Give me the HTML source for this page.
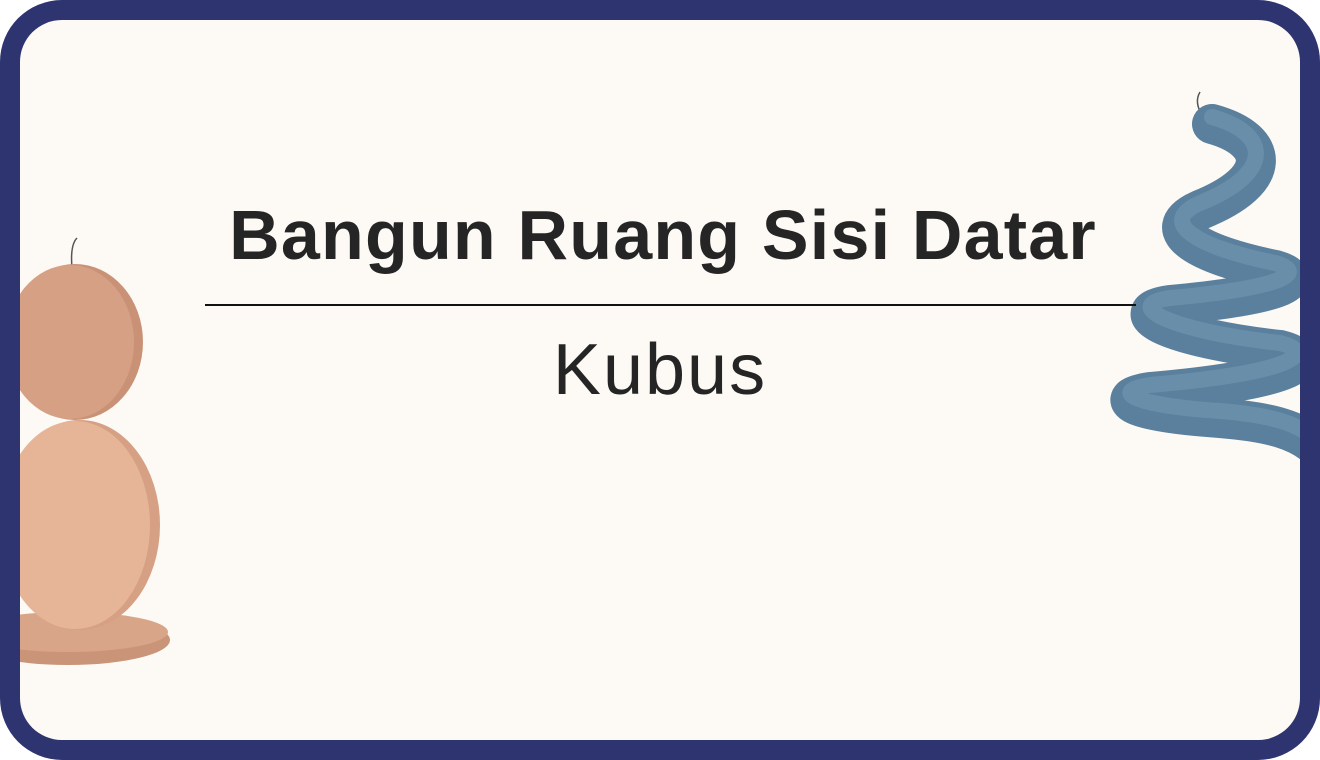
<!DOCTYPE html>
<html><head><style>
html,body{margin:0;padding:0;width:1320px;height:760px;overflow:hidden;background:#fff}
.outer{position:absolute;left:0;top:0;width:1320px;height:760px;background:#2e3470;border-radius:62px}
.inner{position:absolute;left:20px;top:20px;width:1280px;height:720px;background:#fdfaf5;border-radius:42px;overflow:hidden}
.t1{position:absolute;left:0;width:1320px;top:195px;line-height:1;text-align:center;font:bold 70px "Liberation Sans",sans-serif;color:#252525;letter-spacing:1.2px;padding-left:3px}
.t2{position:absolute;left:0;width:1320px;top:329px;line-height:1;text-align:center;font:72px "Liberation Sans",sans-serif;color:#252525;letter-spacing:2px}
.line{position:absolute;left:205px;top:304px;width:931px;height:2px;background:#111}
</style></head><body>
<div class="outer"></div>
<div class="inner">
<svg width="1280" height="720" style="position:absolute;left:0;top:0">
<path d="M52,248 Q50,225 57,218" stroke="#555" stroke-width="1.5" fill="none"/>
<ellipse cx="48" cy="620" rx="102" ry="25" fill="#c99478"/>
<ellipse cx="48" cy="612" rx="100" ry="20" fill="#d9a588"/>
<ellipse cx="60" cy="505" rx="80" ry="105" fill="#d6a084"/>
<ellipse cx="55" cy="505" rx="75" ry="104" fill="#e6b497"/>
<ellipse cx="55" cy="322" rx="68" ry="78" fill="#c99276"/>
<ellipse cx="50" cy="322" rx="64" ry="77" fill="#d6a084"/>
<path d="M1182,95 Q1174,82 1180,72" stroke="#555" stroke-width="1.5" fill="none"/>
<path d="M1192,104 C1250,120 1255,160 1180,190 C1135,210 1180,235 1255,250 C1290,260 1260,275 1150,285 C1100,292 1150,318 1260,330 C1300,340 1270,360 1130,372 C1090,378 1110,392 1200,398 C1250,402 1280,410 1300,430" stroke="#5a809d" stroke-width="40" fill="none" stroke-linecap="round"/>
<path d="M1192,104 C1250,120 1255,160 1180,190 C1135,210 1180,235 1255,250 C1290,260 1260,275 1150,285 C1100,292 1150,318 1260,330 C1300,340 1270,360 1130,372 C1090,378 1110,392 1200,398 C1250,402 1280,410 1300,430" stroke="#7aa0bb" stroke-width="16" fill="none" stroke-linecap="round" opacity="0.45" transform="translate(0,-7)"/>
</svg>
</div>
<div class="t1">Bangun Ruang Sisi Datar</div>
<div class="line"></div>
<div class="t2">Kubus</div>
</body></html>
